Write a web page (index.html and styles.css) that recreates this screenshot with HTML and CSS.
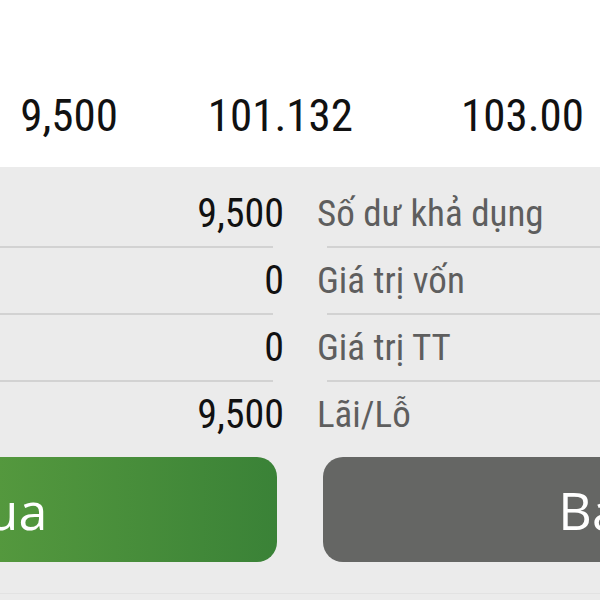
FILE: index.html
```html
<!DOCTYPE html>
<html lang="vi">
<head>
<meta charset="utf-8">
<link rel="stylesheet" href="styles.css">
</head>
<body>
<div class="screen">
  <section class="quote">
    <div class="quote-cell">9,500</div>
    <div class="quote-cell">101.132</div>
    <div class="quote-cell">103.00</div>
  </section>
  <section class="summary">
    <div class="row"><span class="val">9,500</span><span class="lbl">Số dư khả dụng</span></div>
    <div class="sep"><i class="sep-l"></i><i class="sep-r"></i></div>
    <div class="row"><span class="val">0</span><span class="lbl">Giá trị vốn</span></div>
    <div class="sep"><i class="sep-l"></i><i class="sep-r"></i></div>
    <div class="row"><span class="val">0</span><span class="lbl">Giá trị TT</span></div>
    <div class="sep"><i class="sep-l"></i><i class="sep-r"></i></div>
    <div class="row"><span class="val">9,500</span><span class="lbl">Lãi/Lỗ</span></div>
  </section>
  <section class="actions">
    <button class="btn btn-buy">Mua</button>
    <button class="btn btn-sell">Bán</button>
  </section>
  <div class="bottom-line"></div>
</div>
</body>
</html>
```
FILE: styles.css
```css
html, body {
  margin: 0;
  padding: 0;
  background: #ebebeb;
  overflow: hidden;
}
.screen {
  width: 600px;
  height: 600px;
  overflow: hidden;
  font-family: "Roboto Condensed", "Roboto", sans-serif;
  font-stretch: condensed;
}
.quote {
  background: #ffffff;
  height: 167px;
  box-sizing: border-box;
  padding-top: 86px;
  display: grid;
  grid-template-columns: 118px 235px 231px;
}
.quote-cell {
  text-align: right;
  font-size: 45px;
  line-height: 60px;
  color: #111111;
}
.summary {
  padding-top: 14px;
}
.row {
  display: grid;
  grid-template-columns: 284px 1fr;
  column-gap: 33px;
  height: 65px;
  line-height: 65px;
  white-space: nowrap;
}
.val {
  text-align: right;
  font-size: 40px;
  color: #111111;
}
.lbl {
  font-size: 37px;
  color: #5e5e5e;
}
.sep {
  display: flex;
  height: 2px;
}
.sep-l {
  width: 273px;
  background: #d2d2d2;
}
.sep-r {
  flex: 1;
  margin-left: 54px;
  background: #d2d2d2;
}
.actions {
  margin-top: 10px;
  margin-left: -300px;
  display: flex;
  gap: 46px;
}
.btn {
  flex: none;
  box-sizing: border-box;
  width: 577px;
  height: 105px;
  border: none;
  border-radius: 20px;
  padding: 0;
  font-family: "Open Sans", "Noto Sans", sans-serif;
  font-size: 52px;
  color: #ffffff;
  text-align: center;
  line-height: 105px;
}
.btn-buy {
  padding-left: 10px;
  background: linear-gradient(90deg, #64a843 0%, #55993e 50%, #3a8237 100%);
}
.btn-sell {
  padding-right: 12px;
  background: #656664;
}
.bottom-line {
  margin-top: 31px;
  height: 1px;
  background: #e2e2e2;
}
```
